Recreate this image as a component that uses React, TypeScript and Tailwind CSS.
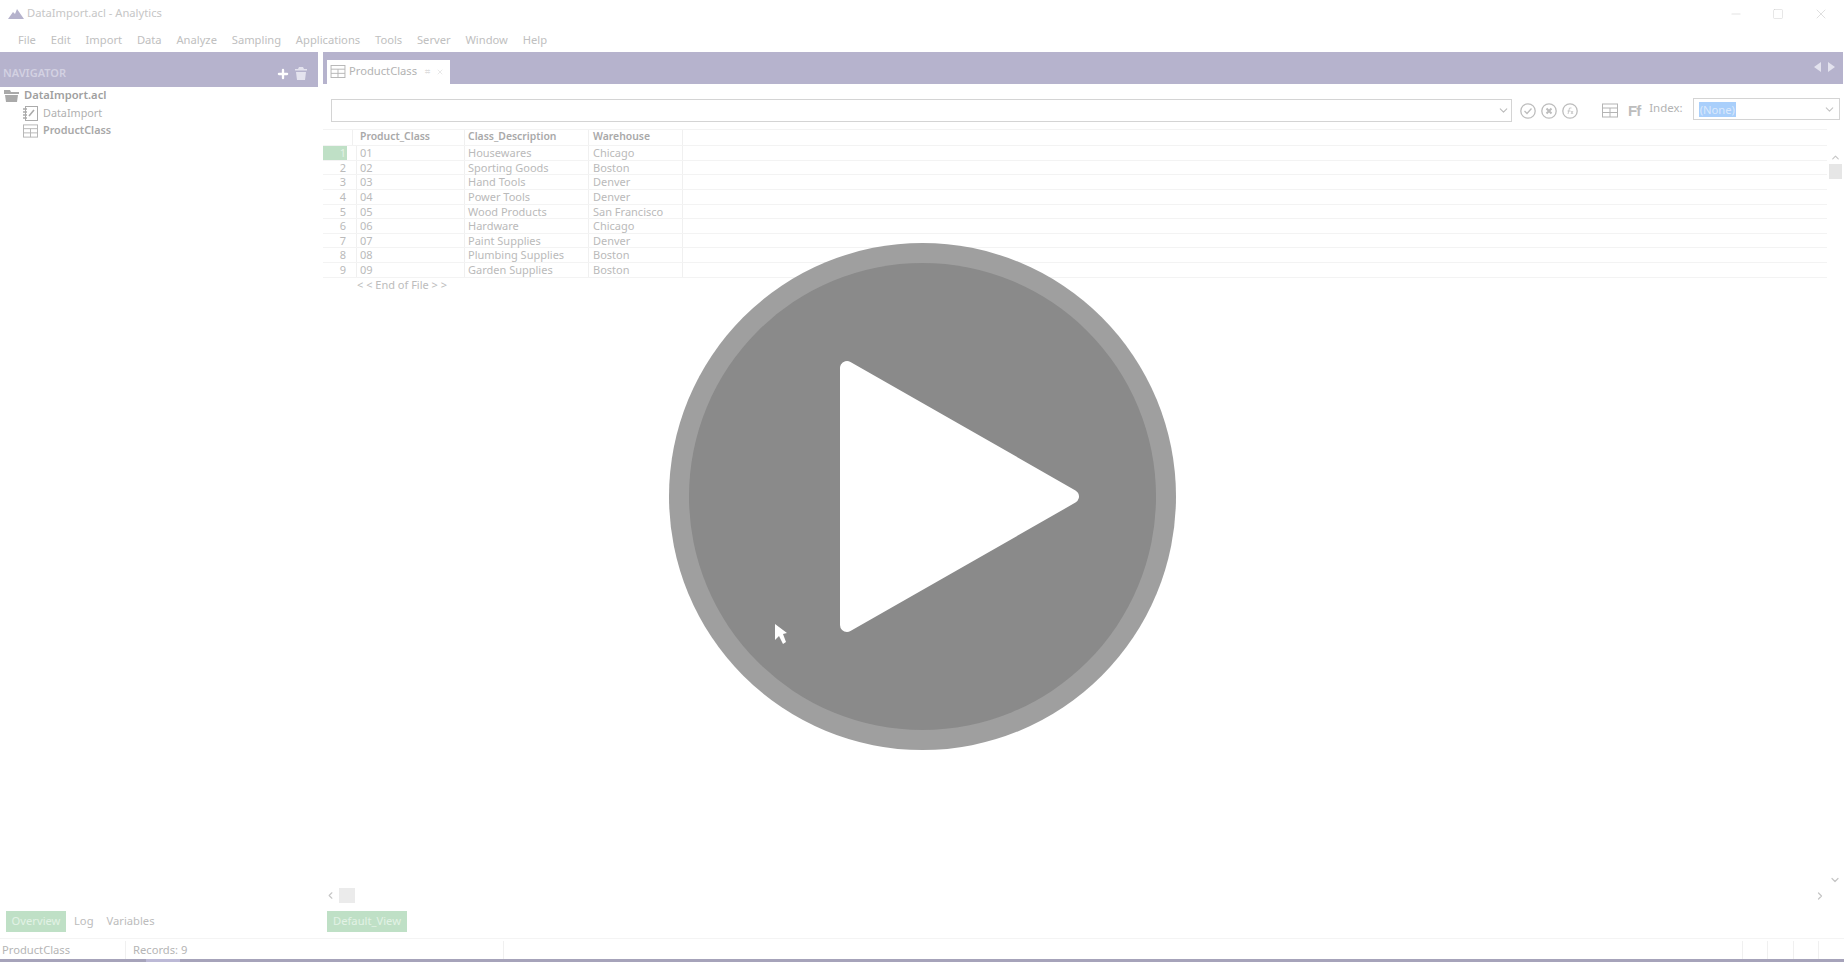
import { ChevronDown, ChevronLeft, ChevronRight, ChevronUp, Minus, Plus, Square, X } from "lucide-react";

const menu = ["File", "Edit", "Import", "Data", "Analyze", "Sampling", "Applications", "Tools", "Server", "Window", "Help"];

const rows = [
  ["1", "01", "Housewares", "Chicago"],
  ["2", "02", "Sporting Goods", "Boston"],
  ["3", "03", "Hand Tools", "Denver"],
  ["4", "04", "Power Tools", "Denver"],
  ["5", "05", "Wood Products", "San Francisco"],
  ["6", "06", "Hardware", "Chicago"],
  ["7", "07", "Paint Supplies", "Denver"],
  ["8", "08", "Plumbing Supplies", "Boston"],
  ["9", "09", "Garden Supplies", "Boston"],
];

function TableIcon({ className }: { className: string }) {
  return (
    <svg viewBox="0 0 16 14" className={className} fill="none" stroke="#b4b4b4" strokeWidth="1">
      <rect x="0.5" y="0.5" width="15" height="13" />
      <path d="M0.5 4.5H15.5M0.5 9H15.5M8 4.5V13.5" />
    </svg>
  );
}

function RoundIcon({ children }: { children: React.ReactNode }) {
  return (
    <svg viewBox="0 0 16 16" className="h-[16px] w-[16px]" fill="none" stroke="#bdbdbd" strokeWidth="1.3">
      <circle cx="8" cy="8" r="7.2" />
      {children}
    </svg>
  );
}

export default function App() {
  return (
    <div className="relative flex h-[962px] w-[1844px] flex-col overflow-hidden bg-white font-['Noto_Sans',sans-serif] text-[11.2px] text-[#b3b3b3]">
      <header className="h-[52px] shrink-0">
        <div className="flex h-[26px] items-center pt-[1px]">
          <svg viewBox="0 0 16 10" className="ml-[8px] h-[10px] w-[16px]" fill="#b5b2cc">
            <path d="M0 10 5 3l2 2 2-5 7 10z" />
          </svg>
          <span className="ml-[3px] text-[#c6c6c6]">DataImport.acl - Analytics</span>
          <div className="ml-auto flex items-center gap-[29px] pr-[15px] text-[#cfcfcf]">
            <Minus size={14} strokeWidth={1} />
            <Square size={12} strokeWidth={1} />
            <X size={16} strokeWidth={1} />
          </div>
        </div>
        <nav className="flex h-[26px] items-center gap-[14.8px] pl-[18px] pt-[3px] text-[#c0c0c0]">
          {menu.map((item) => (
            <span key={item}>{item}</span>
          ))}
        </nav>
      </header>

      <div className="flex min-h-0 flex-1 gap-[5px]">
        <aside className="flex w-[318px] shrink-0 flex-col">
          <div className="flex h-[35px] items-center bg-[#b6b3cd] pl-[3px] pr-[11px] pt-[8px]">
            <span className="text-[11px] font-semibold text-[#d3d1e2]">NAVIGATOR</span>
            <Plus size={14} strokeWidth={4} className="ml-auto text-white" />
            <svg viewBox="0 0 12 13" className="ml-[5px] h-[13px] w-[12px]" fill="#e4e3ee">
              <path d="M4 0h4l1 2h3v1.5H0V2h3zM1 5h10l-1 8H2z" />
            </svg>
          </div>
          <div className="flex h-[17px] items-center pl-[4px] font-semibold text-[#9f9f9f]">
            <svg viewBox="0 0 15 12" className="h-[12px] w-[15px]" fill="#a9a9a9">
              <path d="M0 0h6l1 2h8v2H0zM1 5h13l-1 7H2z" />
            </svg>
            <span className="ml-[5px]">DataImport.acl</span>
          </div>
          <div className="flex h-[18px] items-center pl-[23px] text-[10.8px] text-[#b0b0b0]">
            <svg viewBox="0 0 15 15" className="h-[15px] w-[15px]" fill="none" stroke="#ababab">
              <rect x="2.5" y="0.5" width="12" height="14" />
              <path d="M0 3h4M0 6h4M0 9h4M0 12h4M6 10l5-6" strokeWidth="1.6" />
            </svg>
            <span className="ml-[5px]">DataImport</span>
          </div>
          <div className="flex h-[17px] items-center pl-[23px] text-[10.8px] font-semibold text-[#a8a8a8]">
            <TableIcon className="h-[14px] w-[15px]" />
            <span className="ml-[5px]">ProductClass</span>
          </div>
          <div className="mt-auto mb-[6px] flex h-[21px] items-center pl-[6px]">
            <span className="flex h-full w-[60px] items-center justify-center bg-[#bfe0c6] text-[#e2f2e5]">Overview</span>
            <span className="ml-[8px] text-[#bcbcbc]">Log</span>
            <span className="ml-[13px] text-[#bcbcbc]">Variables</span>
          </div>
        </aside>

        <main className="flex min-w-0 flex-1 flex-col pr-px">
          <div className="flex h-[32px] shrink-0 items-end bg-[#b6b3cd] pl-[4px]">
            <div className="flex h-[24px] w-[123px] items-center bg-white pl-[3px] pb-[1px]">
              <TableIcon className="h-[13px] w-[16px]" />
              <span className="ml-[3px] text-[#b3b3b3]">ProductClass</span>
              <span className="ml-[8px] text-[9px] text-[#dedede]">⌗</span>
              <X size={8} className="ml-[6px] text-[#dedede]" />
            </div>
            <div className="ml-auto flex h-full items-center gap-[7px] pr-[8px] pb-[3px]">
              <svg viewBox="0 0 7 10" className="h-[10px] w-[7px]" fill="#e3e2ee">
                <path d="M7 0v10L0 5z" />
              </svg>
              <svg viewBox="0 0 7 10" className="h-[10px] w-[7px]" fill="#e3e2ee">
                <path d="M0 0v10l7-5z" />
              </svg>
            </div>
          </div>

          <div className="mt-[15px] flex h-[23px] shrink-0 items-center pl-[8px]">
            <div className="flex h-full w-[1181px] items-center justify-end border border-[#d4d4d4] pr-[1px]">
              <ChevronDown size={13} className="text-[#bcbcbc]" />
            </div>
            <div className="ml-[8px] flex gap-[5px]">
              <RoundIcon>
                <path d="M4.5 8l2.5 2.5L11.5 5.5" />
              </RoundIcon>
              <RoundIcon>
                <path d="M5.5 5.5l5 5M10.5 5.5l-5 5" strokeWidth="2" />
              </RoundIcon>
              <RoundIcon>
                <path d="M6 11l1.5-6h2M5.5 8h3M9 8l2 3M11 8l-2 3" strokeWidth="0.8" />
              </RoundIcon>
            </div>
            <TableIcon className="ml-[24px] h-[15px] w-[16px]" />
            <span className="ml-[10px] font-['Liberation_Sans',sans-serif] text-[15px] font-bold leading-none tracking-[-1px] text-[#bdbdbd]">Ff</span>
            <span className="ml-[9px] mb-[6px] text-[11.5px]">Index:</span>
            <div className="ml-[10px] mb-[3px] flex h-[22px] w-[147px] items-center border border-[#d4d4d4] pl-[5px] pr-[3px]">
              <span className="bg-[#a9cffb] px-[1px] leading-[15px] text-[#dbe9fb]">(None)</span>
              <ChevronDown size={13} className="ml-auto text-[#c4c4c4]" />
            </div>
          </div>

          <div className="flex min-h-0 flex-1">
            <div className="flex-1 pt-[7px] text-[11px]">
              <div className="flex h-[17px] items-center border-y border-[#f3f3f3] text-[10.4px] font-semibold text-[#a9a9a9]">
                <div className="h-full w-[30px] border-r border-[#f0f0f0]" />
                <div className="h-full w-[112px] border-r border-[#f0f0f0] pl-[7px] leading-[13px]">Product_Class</div>
                <div className="h-full w-[124px] border-r border-[#f0f0f0] pl-[3px] leading-[13px]">Class_Description</div>
                <div className="h-full w-[94px] border-r border-[#f0f0f0] pl-[4px] leading-[13px]">Warehouse</div>
              </div>
              {rows.map(([n, code, desc, wh], i) => (
                <div key={n} className="flex h-[14.65px] items-center border-b border-[#f3f3f3] leading-none text-[#bababa]">
                  <div className={i === 0 ? "h-full w-[24px] bg-[#bfe0c6] pr-[1px] text-right leading-[14px] text-[#e2f2e5]" : "h-full w-[24px] pr-[1px] text-right leading-[14px]"}>{n}</div>
                  <div className="h-full w-[10px] border-r border-[#f0f0f0]" />
                  <div className="h-full w-[108px] border-r border-[#f0f0f0] pl-[3px] leading-[14px]">{code}</div>
                  <div className="h-full w-[124px] border-r border-[#f0f0f0] pl-[3px] leading-[14px]">{desc}</div>
                  <div className="h-full w-[94px] border-r border-[#f0f0f0] pl-[4px] leading-[14px]">{wh}</div>
                </div>
              ))}
              <div className="pl-[34px] leading-[14px] text-[#bcbcbc]">&lt; &lt; End of File &gt; &gt;</div>
            </div>
            <div className="flex w-[16px] shrink-0 flex-col items-center pt-[30px] pb-[2px] text-[#c6c6c6]">
              <ChevronUp size={11} strokeWidth={2.5} />
              <div className="mt-[1px] h-[15px] w-[13px] bg-[#e6e6e6]" />
              <ChevronDown size={12} strokeWidth={2.5} className="mt-auto" />
            </div>
          </div>

          <div className="flex h-[15px] shrink-0 items-center pl-[2px] pr-[17px] text-[#c6c6c6]">
            <ChevronLeft size={11} strokeWidth={2.5} />
            <div className="ml-[3px] h-full w-[16px] bg-[#ebebeb]" />
            <ChevronRight size={12} strokeWidth={2.5} className="ml-auto" />
          </div>
          <div className="mt-[8px] mb-[6px] pl-[4px]">
            <span className="flex h-[21px] w-[80px] items-center justify-center bg-[#bfe0c6] text-[#e2f2e5]">Default_View</span>
          </div>
        </main>
      </div>

      <footer className="flex h-[21px] shrink-0 items-center border-t border-[#f4f4f4] pt-[2px] text-[#b5b5b5]">
        <div className="flex h-full w-[126px] items-center border-r border-[#f0f0f0] pl-[2px]">ProductClass</div>
        <div className="flex h-full w-[378px] items-center border-r border-[#f0f0f0] pl-[7px]">Records: 9</div>
        <div className="ml-auto flex h-full">
          <div className="w-[25px] border-l border-[#f0f0f0]" />
          <div className="w-[26px] border-l border-[#f0f0f0]" />
          <div className="w-[25px] border-l border-[#f0f0f0]" />
          <div className="w-[26px] border-l border-[#f0f0f0]" />
        </div>
      </footer>
      <div className="flex h-[3px] shrink-0 bg-[#a6a3ba]">
        <div className="ml-[146px] w-[34px] bg-[#bcb9d6]" />
      </div>

      {/* play overlay sits on top of the whole app */}
      <svg viewBox="0 0 507 507" className="absolute left-[669px] top-[243px] h-[507px] w-[507px]">
        <circle cx="253.5" cy="253.5" r="253.5" fill="#9f9f9f" />
        <circle cx="253.5" cy="253.5" r="233.5" fill="#8a8a8a" />
        <path d="M178 125 L178 382 L403 253.5 Z" fill="#fff" stroke="#fff" strokeWidth="14" strokeLinejoin="round" />
        <path d="M106 381 L106 397 L110 393 L114 401 L117 399 L114 391 L118 390 Z" fill="#fff" />
      </svg>
    </div>
  );
}
